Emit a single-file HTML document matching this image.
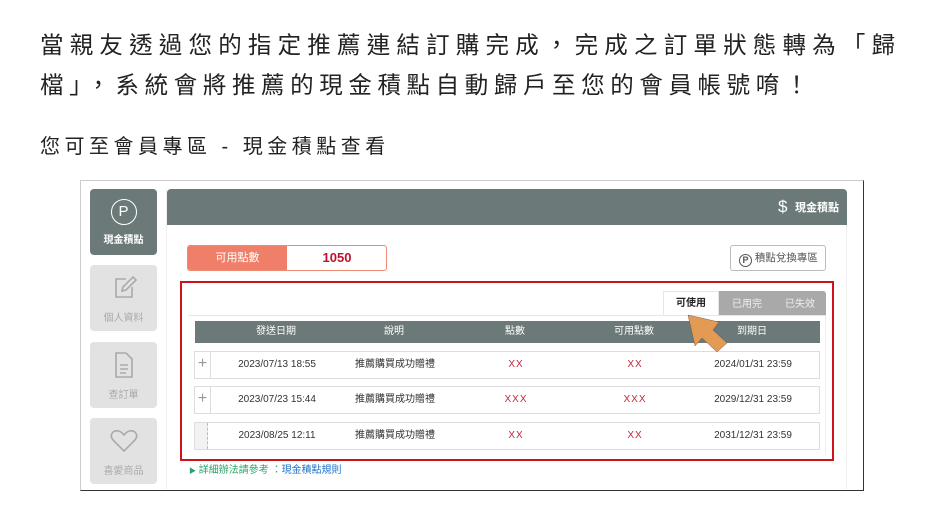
<!DOCTYPE html>
<html><head><meta charset="utf-8"><style>
*{margin:0;padding:0;box-sizing:border-box}
body{width:950px;height:516px;background:#fff;position:relative;overflow:hidden;font-family:"Liberation Sans","Noto Sans CJK TC",sans-serif;color:#333}
.a{position:absolute}
.l{position:absolute;left:40px;font-size:23.5px;letter-spacing:6.2px;white-space:nowrap;color:#222;line-height:30px}
.side{position:absolute;left:90px;width:67px;border-radius:4px;background:#e2e2e2;color:#aaa;font-size:10px;text-align:center}
.row{position:absolute;left:194px;width:626px;height:28px;border:1px solid #ddd;background:#fff}
.row .p{position:absolute;left:0;top:0;width:16px;height:26px;border-right:1px solid #ddd;color:#999;font-size:16px;text-align:center;line-height:24px}
.row span{position:absolute;top:6px;line-height:14px;font-size:10px;transform:translateX(-50%);white-space:nowrap;color:#333}
.row .r{color:#c0283a;letter-spacing:1px}
.th{position:absolute;top:4px;line-height:14px;transform:translateX(-50%);white-space:nowrap}
</style></head><body>
<div class="l" style="top:30px">當親友透過您的指定推薦連結訂購完成，完成之訂單狀態轉為「歸</div>
<div class="l" style="top:70px;letter-spacing:5.6px">檔」，系統會將推薦的現金積點自動歸戶至您的會員帳號唷！</div>
<div class="a" style="left:40px;top:134px;font-size:20px;letter-spacing:4.5px;color:#222;line-height:26px">您可至會員專區 - 現金積點查看</div>

<div class="a" style="left:80px;top:180px;width:784px;height:311px;border:1px solid #ccc;border-right:1px solid #333;border-bottom:1px solid #333"></div>
<div class="a" style="left:166px;top:189px;width:1px;height:300px;background:#eee"></div>
<div class="a" style="left:846px;top:225px;width:1px;height:264px;background:#eee"></div>

<div class="side" style="top:189px;height:66px;background:#6b7a78;color:#fff">
<div style="margin:10px auto 0;width:26px;height:26px;border:1.5px solid #fff;border-radius:50%;font-size:15px;line-height:23px">P</div>
<div style="margin-top:6px;font-weight:bold">現金積點</div></div>
<div class="side" style="top:265px;height:66px">
<svg width="30" height="30" viewBox="0 0 30 30" style="margin-top:8px"><path d="M17 6H7v18h16V14" fill="none" stroke="#aaa" stroke-width="1.6"/><path d="M13 18l1-4 10-10 3 3-10 10z" fill="none" stroke="#aaa" stroke-width="1.6"/></svg>
<div style="margin-top:3px">個人資料</div></div>
<div class="side" style="top:342px;height:66px">
<svg width="24" height="30" viewBox="0 0 24 30" style="margin-top:8px"><path d="M4 3h10l6 6v18H4z" fill="none" stroke="#aaa" stroke-width="1.6"/><path d="M8 15h8M8 19h8M8 23h6" stroke="#aaa" stroke-width="1.4"/></svg>
<div style="margin-top:3px">查訂單</div></div>
<div class="side" style="top:418px;height:66px">
<svg width="30" height="26" viewBox="0 0 30 26" style="margin-top:10px"><path d="M15 23L4 12C0 7 4 2 9 3c3 0 5 3 6 4 1-1 3-4 6-4 5-1 9 4 5 9z" fill="none" stroke="#aaa" stroke-width="1.6"/></svg>
<div style="margin-top:5px">喜愛商品</div></div>

<div class="a" style="left:167px;top:189px;width:680px;height:36px;background:#6b7a78;border-radius:4px 4px 0 0"></div>
<div class="a" style="left:778px;top:197px;color:#fff;font-size:17px;line-height:20px">$</div>
<div class="a" style="left:795px;top:201px;color:#fff;font-size:11px;font-weight:bold;line-height:14px">現金積點</div>

<div class="a" style="left:187px;top:245px;width:200px;height:26px;border:1px solid #f08a74;border-radius:3px;overflow:hidden">
<div class="a" style="left:0;top:0;width:99px;height:24px;background:#f07f6a;color:#fff;font-size:11px;text-align:center;line-height:24px">可用點數</div>
<div class="a" style="left:99px;top:0;width:100px;height:24px;color:#c0102e;font-size:13px;font-weight:bold;text-align:center;line-height:24px">1050</div></div>

<div class="a" style="left:730px;top:245px;width:96px;height:26px;border:1px solid #bbb;border-radius:3px;font-size:10.5px;color:#555;line-height:24px;padding-left:8px;white-space:nowrap">
<span style="display:inline-block;width:13px;height:13px;border:1.3px solid #555;border-radius:50%;font-size:9px;line-height:10px;text-align:center;vertical-align:-2px;font-weight:bold">P</span> 積點兌換專區</div>

<div class="a" style="left:180px;top:281px;width:654px;height:180px;border:2px solid #d0121b"></div>
<div class="a" style="left:663px;top:291px;width:56px;height:25px;background:#fff;border:1px solid #e6e6e6;border-bottom:none;font-size:10px;font-weight:bold;text-align:center;line-height:24px;color:#222">可使用</div>
<div class="a" style="left:719px;top:291px;width:107px;height:24px;background:#a9a9a9;border-radius:0 3px 0 0"></div>
<div class="a" style="left:732px;top:298px;color:#eee;font-size:10px;line-height:14px">已用完</div>
<div class="a" style="left:785px;top:298px;color:#eee;font-size:10px;line-height:14px">已失效</div>
<div class="a" style="left:188px;top:315px;width:638px;height:1px;background:#e6e6e6"></div>
<div class="a" style="left:825px;top:315px;width:1px;height:140px;background:#eee"></div>

<div class="a" style="left:195px;top:321px;width:625px;height:22px;background:#6b7a78;color:#fff;font-size:10px">
<span class="th" style="left:81px">發送日期</span>
<span class="th" style="left:199px">說明</span>
<span class="th" style="left:320px">點數</span>
<span class="th" style="left:439px">可用點數</span>
<span class="th" style="left:557px">到期日</span></div>

<div class="row" style="top:351px"><div class="p">+</div><span style="left:82px">2023/07/13 18:55</span><span style="left:200px">推薦購買成功贈禮</span><span class="r" style="left:321px">XX</span><span class="r" style="left:440px">XX</span><span style="left:558px">2024/01/31 23:59</span></div>
<div class="row" style="top:386px"><div class="p">+</div><span style="left:82px">2023/07/23 15:44</span><span style="left:200px">推薦購買成功贈禮</span><span class="r" style="left:321px">XXX</span><span class="r" style="left:440px">XXX</span><span style="left:558px">2029/12/31 23:59</span></div>
<div class="row" style="top:422px"><div class="p" style="background:#f2f2f2;border-right:1px dashed #bbb;width:13px"></div><span style="left:82px">2023/08/25 12:11</span><span style="left:200px">推薦購買成功贈禮</span><span class="r" style="left:321px">XX</span><span class="r" style="left:440px">XX</span><span style="left:558px">2031/12/31 23:59</span></div>

<svg class="a" style="left:0;top:0" width="950" height="516"><polygon points="688,315 695,346 702,338 717,352 727,343 713,330 719,322" fill="#e39a55" stroke="#5a4a3a" stroke-width="0.4"/></svg>

<div class="a" style="left:189px;top:464px;font-size:10px;color:#2aa36a;line-height:14px;white-space:nowrap"><span style="font-size:7px">▶</span> 詳細辦法請參考 ：<span style="color:#1a73c8">現金積點規則</span></div>
</body></html>
